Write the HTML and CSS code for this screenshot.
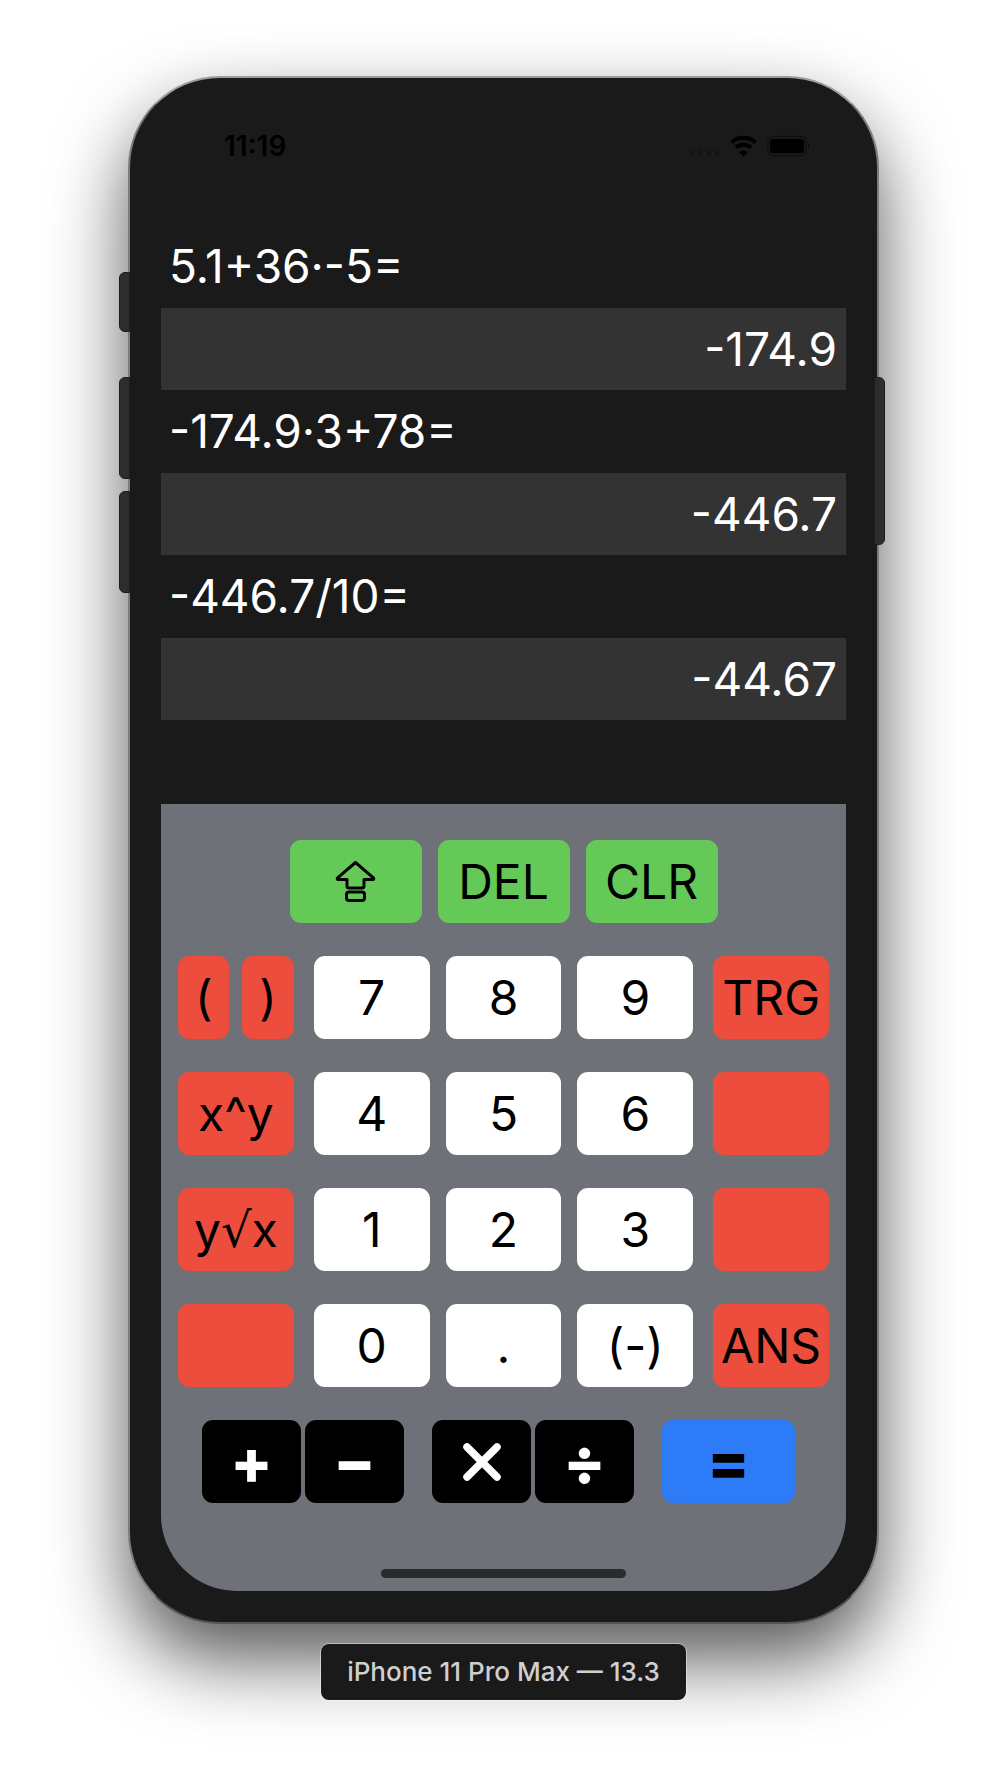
FILE: index.html
```html
<!DOCTYPE html>
<html lang="en">
<head>
<meta charset="utf-8">
<meta name="viewport" content="width=device-width, initial-scale=1">
<title>Calculator</title>
<link rel="stylesheet" href="styles.css">
</head>
<body>
<main class="stage">
  <div class="phone">
    <span class="side-button mute"></span>
    <span class="side-button volume-up"></span>
    <span class="side-button volume-down"></span>
    <span class="side-button power"></span>
    <div class="screen">
      <header class="status-bar">
        <time class="clock">11:19</time>
        <svg class="status-icons" width="120" height="24" viewBox="0 0 120 24" aria-hidden="true">
          <g fill="#131313"><circle cx="1" cy="19" r="2.6"/><circle cx="9" cy="19" r="2.6"/><circle cx="18" cy="19" r="2.6"/><circle cx="26" cy="19" r="2.6"/></g>
          <g fill="none" stroke="#000" stroke-width="4.200">
            <path d="M40.500 8.500a17.500 17.500 0 0 1 24 0"/>
            <path d="M45 13.500a11 11 0 0 1 15 0"/>
          </g>
          <path d="M48.300 18.200a6 6 0 0 1 8.400 0L52.500 22.500z"/>
          <rect x="77" y="2.500" width="38" height="19" rx="5" fill="none" stroke="#111" stroke-width="1.500"/>
          <rect x="79" y="5" width="34" height="14" rx="3"/>
          <path d="M117 9q3 3 0 6z" fill="#0c0c0c"/>
        </svg>
      </header>
      <section class="history" aria-label="History">
        <p class="expression">5.1+36·-5=</p>
        <p class="result">-174.9</p>
        <p class="expression">-174.9·3+78=</p>
        <p class="result">-446.7</p>
        <p class="expression">-446.7/10=</p>
        <p class="result">-44.67</p>
      </section>
      <section class="keypad" aria-label="Keypad">
        <div class="row commands">
          <button class="key green" aria-label="Shift">
            <svg width="42" height="44" viewBox="0 0 42 44" fill="none" stroke="#000" stroke-width="3" stroke-linejoin="round" aria-hidden="true">
              <path d="M20.500 2.500 2.300 18.200Q2 19.600 3.500 19.600H12V26Q12 28 14 28H27Q29 28 29 26V19.600H37.500Q39 19.600 38.700 18.200Z"/>
              <rect x="11.500" y="32" width="18" height="8.500" rx="2.500"/>
            </svg>
          </button>
          <button class="key green">DEL</button>
          <button class="key green">CLR</button>
        </div>
        <div class="row">
          <div class="side parens"><button class="key red">(</button><button class="key red">)</button></div>
          <div class="digits"><button class="key">7</button><button class="key">8</button><button class="key">9</button></div>
          <div class="side"><button class="key red">TRG</button></div>
        </div>
        <div class="row">
          <div class="side"><button class="key red">x^y</button></div>
          <div class="digits"><button class="key">4</button><button class="key">5</button><button class="key">6</button></div>
          <div class="side"><button class="key red" aria-label="Unassigned"></button></div>
        </div>
        <div class="row">
          <div class="side"><button class="key red">y<span class="radical">√</span>x</button></div>
          <div class="digits"><button class="key">1</button><button class="key">2</button><button class="key">3</button></div>
          <div class="side"><button class="key red" aria-label="Unassigned"></button></div>
        </div>
        <div class="row">
          <div class="side"><button class="key red" aria-label="Unassigned"></button></div>
          <div class="digits"><button class="key">0</button><button class="key">.</button><button class="key">(-)</button></div>
          <div class="side"><button class="key red">ANS</button></div>
        </div>
        <div class="row operators">
          <div class="pair"><button class="key black">+</button><button class="key black">−</button></div>
          <div class="pair">
            <button class="key black" aria-label="Multiply">
              <svg width="38" height="38" viewBox="0 0 38 38" stroke="#fff" stroke-width="7.500" stroke-linecap="round" aria-hidden="true"><path d="M4 4 34 34M34 4 4 34"/></svg>
            </button>
            <button class="key black">÷</button>
          </div>
          <button class="key blue">=</button>
        </div>
        <div class="home-indicator"></div>
      </section>
    </div>
  </div>
  <p class="device-name">iPhone 11 Pro Max — 13.3</p>
</main>
</body>
</html>
```

FILE: styles.css
```css
* {
  box-sizing: border-box;
}

body {
  margin: 0;
  background: #fff;
  color: #000;
  font-family: Inter, "Liberation Sans", sans-serif;
}

.stage {
  display: flex;
  flex-direction: column;
  align-items: center;
  gap: 20px;
  padding: 76px 127px 72px 128px;
}

.phone {
  position: relative;
  width: 100%;
  max-width: 751px;
  padding: 31px;
  border: 2px solid #7c7c7c;
  border-top-color: #9c9c9c;
  border-bottom-color: #555;
  border-radius: 92px;
  background: #1a1a1a;
  box-shadow: 0 36px 76px rgba(0, 0, 0, 0.66);
}

.side-button {
  position: absolute;
  left: -11px;
  width: 11px;
  border: 1px solid #1c1c1c;
  border-radius: 6px 0 0 6px;
  background: #2d2d2d;
}

.mute {
  top: 194px;
  height: 60px;
}

.volume-up {
  top: 299px;
  height: 102px;
}

.volume-down {
  top: 413px;
  height: 102px;
}

.power {
  top: 299px;
  right: -8px;
  left: auto;
  width: 11px;
  height: 168px;
  border-radius: 0 6px 6px 0;
}

.screen {
  overflow: hidden;
  border-radius: 0 0 76px 76px;
}

.status-bar {
  display: flex;
  align-items: center;
  justify-content: space-between;
  height: 116px;
  padding: 0 35px 42px 63px;
}

.clock {
  font-size: 28px;
  font-weight: 600;
}

.history {
  min-height: 579px;
  color: #fff;
  font-size: 46px;
}

.expression,
.result {
  margin: 0;
  padding: 0 9px 0 8px;
}

.expression {
  line-height: 83px;
}

.result {
  background: #333;
  line-height: 82px;
  text-align: right;
}

.keypad {
  display: flex;
  flex-direction: column;
  gap: 33px;
  padding: 36px 17px 13px;
  background: #6e7178;
}

.row {
  display: flex;
  gap: 20px;
}

.key {
  display: flex;
  flex: 1 1 0;
  align-items: center;
  justify-content: center;
  min-width: 0;
  height: 83px;
  padding: 0;
  border: 0;
  border-radius: 11px;
  background: #fff;
  color: #000;
  font: 400 48px/56px Inter, "Liberation Sans", sans-serif;
  white-space: nowrap;
}

.side {
  display: flex;
  flex: 1 1 0;
  gap: 13px;
}

.digits {
  display: flex;
  flex: 3 1 32px;
  gap: 16px;
}

.radical {
  font-family: "DejaVu Sans", sans-serif;
}

.commands {
  justify-content: center;
  gap: 16px;
}

.green {
  flex: 0 1 132px;
  background: #65c957;
}

.red {
  background: #ec4d3c;
}

.operators {
  justify-content: center;
  gap: 28px;
  padding-right: 10px;
}

.pair {
  display: flex;
  gap: 4px;
}

.black {
  flex: 0 1 99px;
  width: 99px;
  background: #000;
  color: #fff;
}

.blue {
  flex: 0 1 133px;
  background: #2d7bf6;
}

.black,
.blue {
  font-size: 62px;
  font-weight: 800;
}

.home-indicator {
  align-self: center;
  width: 245px;
  height: 9px;
  margin-top: 33px;
  border-radius: 5px;
  background: #2b2b2b;
}

.device-name {
  z-index: 1;
  margin: 0;
  padding: 0 26px;
  border-radius: 8px;
  background: #1a1a1a;
  box-shadow: 0 0 0 1px rgba(255, 255, 255, 0.4);
  color: #d0cfcf;
  font-size: 26px;
  font-weight: 500;
  line-height: 56px;
}
```
